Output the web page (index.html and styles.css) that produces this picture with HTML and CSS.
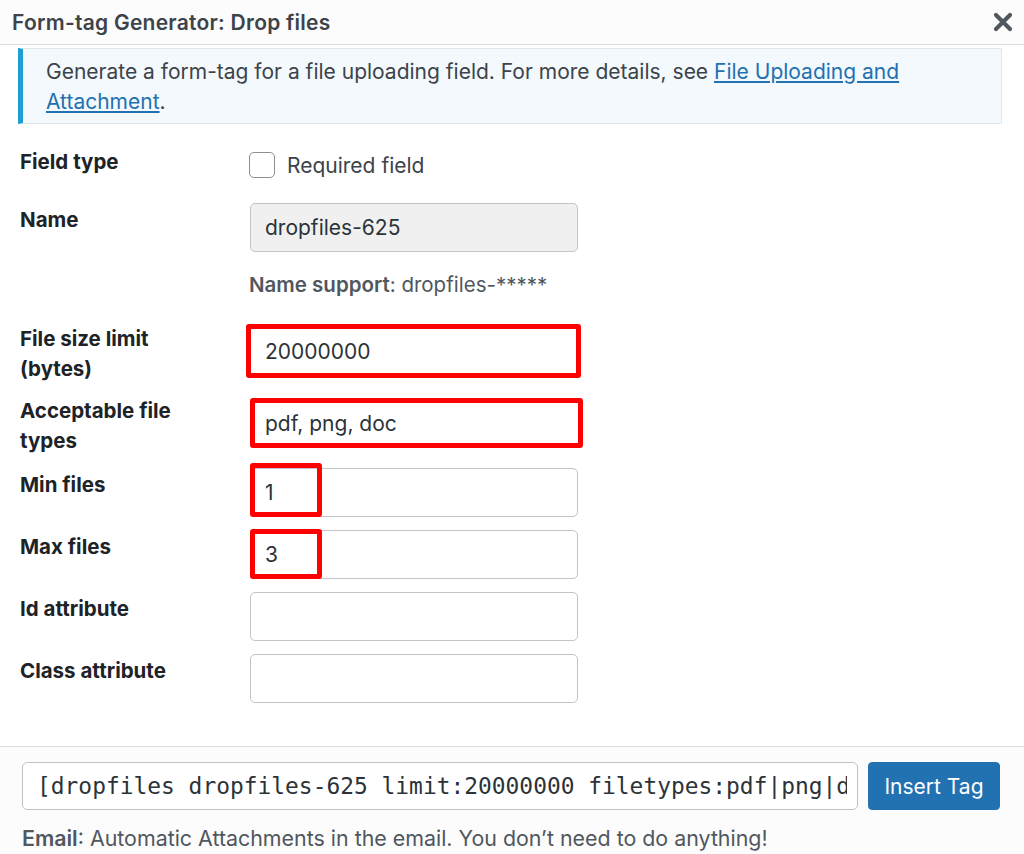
FILE: index.html
```html
<!DOCTYPE html>
<html>
<head>
	<meta charset="utf-8">
	<title>Form-tag Generator: Drop files</title>
	<link rel="stylesheet" href="styles.css">
</head>
<body>
<div class="dialog">

<header class="titlebar">
	<h1>Form-tag Generator: Drop files</h1>
	<svg class="close" width="20" height="20" viewBox="0 0 20 20">
		<path d="M3 3 L17 17 M17 3 L3 17" stroke="#50575e" stroke-width="4.2" stroke-linecap="round"/>
	</svg>
</header>

<main class="content">
	<div class="notice">
		Generate a form-tag for a file uploading field. For more details, see <a href="#">File Uploading and Attachment</a>.
	</div>

	<div class="row row-type">
		<div class="label">Field type</div>
		<div class="field">
			<label class="check"><span class="box"></span> Required field</label>
		</div>
	</div>

	<div class="row row-name">
		<div class="label">Name</div>
		<div class="field">
			<input type="text" class="input input-ro" value="dropfiles-625" readonly>
			<p class="hint"><b>Name support</b>: dropfiles-*****</p>
		</div>
	</div>

	<div class="row row-size">
		<div class="label">File size limit<br>(bytes)</div>
		<div class="field">
			<input type="text" class="input marked marked-size" value="20000000">
		</div>
	</div>

	<div class="row row-types">
		<div class="label">Acceptable file<br>types</div>
		<div class="field">
			<input type="text" class="input marked marked-types" value="pdf, png, doc">
		</div>
	</div>

	<div class="row row-min">
		<div class="label">Min files</div>
		<div class="field mark-wrap">
			<input type="text" class="input" value="1">
			<span class="mark"></span>
		</div>
	</div>

	<div class="row">
		<div class="label">Max files</div>
		<div class="field mark-wrap">
			<input type="text" class="input" value="3">
			<span class="mark mark-max"></span>
		</div>
	</div>

	<div class="row">
		<div class="label">Id attribute</div>
		<div class="field"><input type="text" class="input"></div>
	</div>

	<div class="row">
		<div class="label">Class attribute</div>
		<div class="field"><input type="text" class="input"></div>
	</div>
</main>

<footer class="insert-box">
	<div class="insert-row">
		<input type="text" class="tag" value="[dropfiles dropfiles-625 limit:20000000 filetypes:pdf|png|doc min-file:1 max-file:3]" readonly>
		<button class="insert-btn">Insert Tag</button>
	</div>
	<p class="email"><b>Email</b>: Automatic Attachments in the email. You don’t need to do anything!</p>
</footer>

</div>
</body>
</html>
```

FILE: styles.css
```css
html, *, *::before,
*::after{
	box-sizing: border-box;
}
body{
	margin: 0;
	background: #fff;
	font-family: "Inter", "Roboto", sans-serif;
	color: #1d2327;
	overflow: hidden;
}
.dialog{
	width: 1024px;
	height: 854px;
	display: flex;
	flex-direction: column;
}
.titlebar{
	height: 45px;
	flex: none;
	background: #fcfcfc;
	border-bottom: 1px solid #dcdcde;
	display: flex;
	align-items: center;
	justify-content: space-between;
	padding: 0 11px 0 12px;
}
.titlebar h1{
	margin: 0;
	font-size: 21px;
	font-weight: 600;
	color: #3c434a;
	letter-spacing: 0.25px;
}
.close{
	display: block;
}

.content{
	padding: 3px 22px 0 18px;
	flex: 1;
}
.notice{
	background: #f3f9fd;
	border: 1px solid #e0e6ea;
	border-left: 5px solid #1e9fd4;
	padding: 8px 22px 6px 23px;
	font-size: 21px;
	line-height: 30px;
	color: #3c434a;
}
.notice a{
	color: #2271b1;
}

.row{
	display: flex;
	margin-top: 13px;
	padding-left: 2px;
}
.label{
	width: 230px;
	flex: none;
	font-size: 20.5px;
	font-weight: 700;
	line-height: 30px;
	color: #1d2327;
	margin-top: 2px;
}
.field{
	width: 328px;
}
.row-type{
	margin-top: 25px;
}
.row-type .label{
	margin-top: -2px;
}
.row-name{
	margin-top: 25px;
}
.row-size{
	margin-top: 24px;
}
.row-size .label{
	margin-top: 0;
}
.row-types{
	margin-top: 14px;
	height: 70px;
}
.row-types .label{
	margin-top: -2px;
}
.row-min{
	margin-top: 0;
}

.check{
	display: flex;
	align-items: center;
	gap: 12px;
	font-size: 21px;
	color: #3c434a;
	margin-top: 3px;
	margin-left: -1px;
}
.box{
	width: 26px;
	height: 26px;
	border: 1px solid #8c8f94;
	border-radius: 5px;
	background: #fff;
}

.input{
	display: block;
	width: 328px;
	height: 49px;
	border: 1px solid #c3c4c7;
	border-radius: 5px;
	padding: 0 14px;
	font-family: "Inter", "Roboto", sans-serif;
	font-size: 21px;
	color: #2c3338;
	background: #fff;
}
.input-ro{
	background: #f0f0f1;
}
.hint{
	margin: 18px 0 0 -1px;
	font-size: 20.5px;
	line-height: 30px;
	color: #50575e;
}
.hint b{
	font-weight: 600;
}

.marked{
	border: 5px solid #ff0000;
	border-radius: 3px;
	padding: 0 14px;
}
.marked-size{
	width: 335px;
	height: 54px;
	margin-left: -4px;
}
.marked-types{
	width: 333px;
	height: 50px;
	padding-left: 10px;
}

.mark-wrap{
	position: relative;
}
.mark{
	position: absolute;
	left: 0;
	top: -5px;
	width: 72px;
	height: 54px;
	border: 5px solid #ff0000;
	border-radius: 3px;
}
.mark-max{
	top: -1px;
	height: 50px;
}

.insert-box{
	flex: none;
	background: #fcfcfc;
	border-top: 1px solid #dcdcde;
	padding: 15px 22px 0 22px;
	height: 108px;
}
.insert-row{
	display: flex;
	gap: 10px;
}
.tag{
	width: 836px;
	height: 48px;
	border: 1px solid #c3c4c7;
	border-radius: 5px;
	padding: 0 10px 0 14px;
	font-family: "DejaVu Sans Mono", monospace;
	font-size: 22.9px;
	color: #2c3338;
	background: #fff;
}
.insert-btn{
	width: 132px;
	height: 48px;
	background: #2271b1;
	color: #fff;
	border: 1px solid #2271b1;
	border-radius: 4px;
	font-family: "Inter", "Roboto", sans-serif;
	font-size: 21px;
	cursor: pointer;
}
.email{
	margin: 15px 0 0 0;
	font-size: 21.4px;
	color: #50575e;
}
.email b{
	font-weight: 600;
}
```
